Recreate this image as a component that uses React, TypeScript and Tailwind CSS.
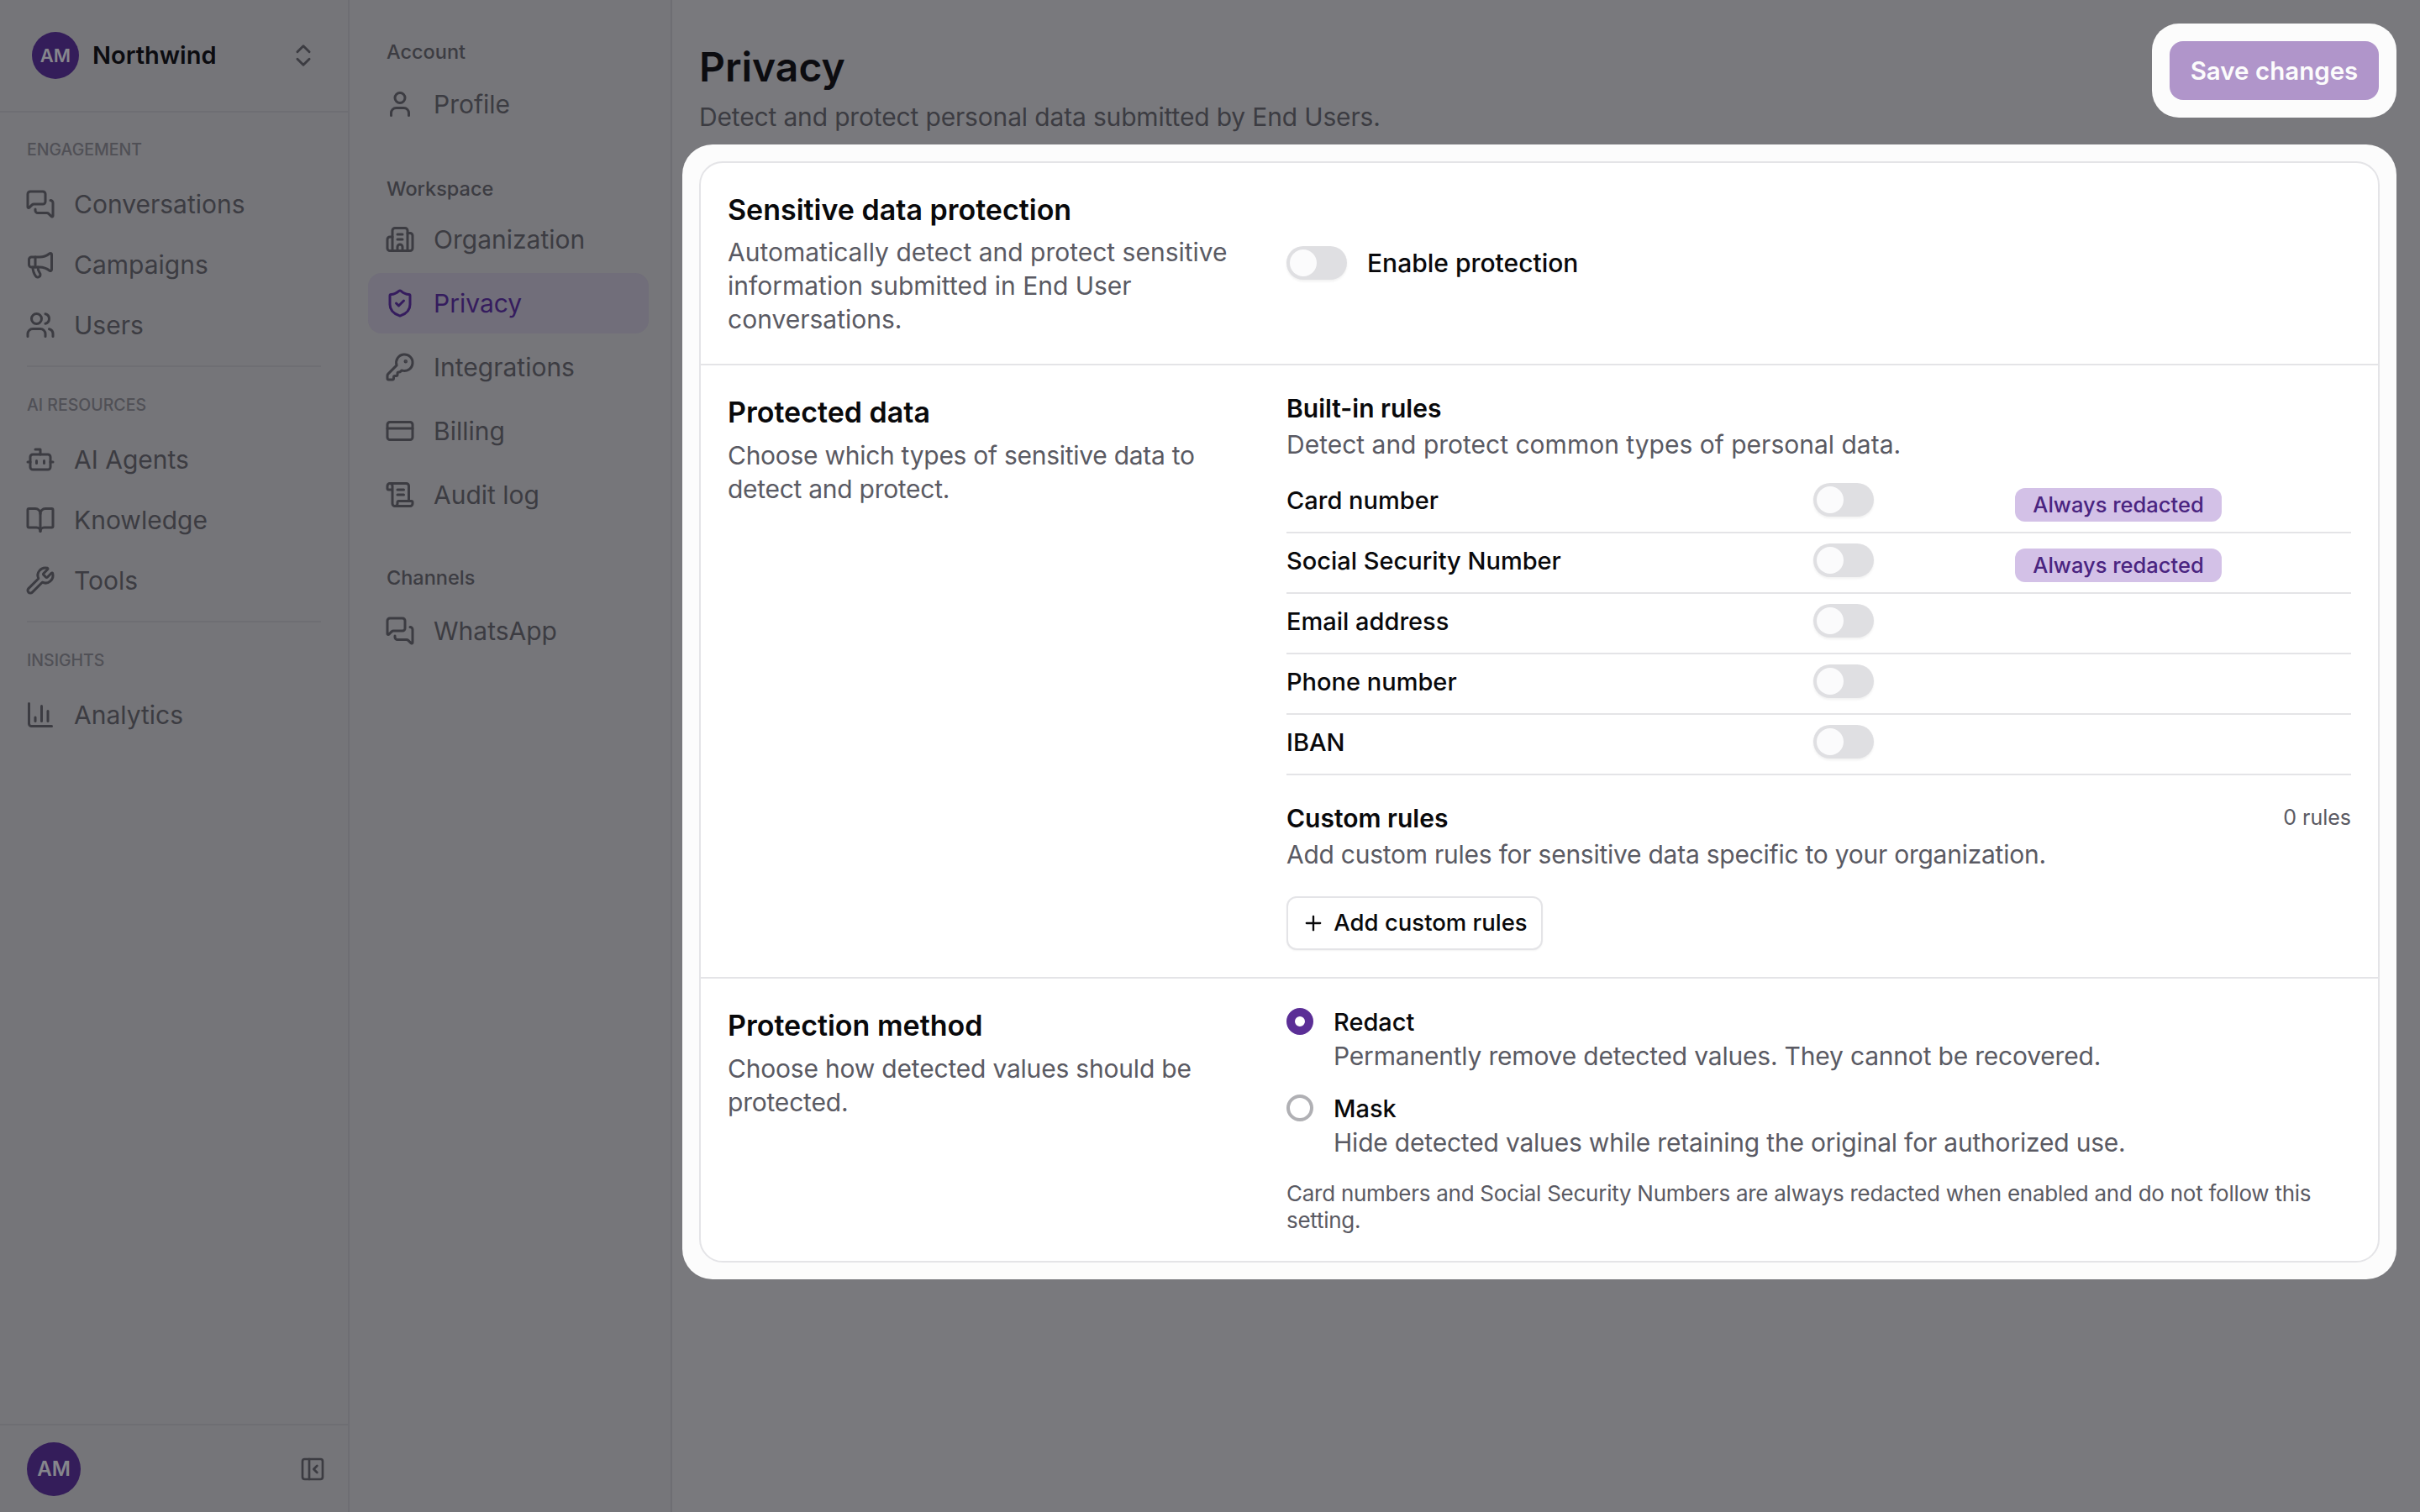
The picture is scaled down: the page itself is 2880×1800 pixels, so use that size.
import {
  BookOpen,
  Bot,
  Building2,
  ChartColumn,
  ChevronsUpDown,
  CreditCard,
  KeyRound,
  Megaphone,
  MessagesSquare,
  PanelLeftClose,
  Plus,
  ScrollText,
  ShieldCheck,
  User,
  Users,
  Wrench,
} from "lucide-react";
import type { LucideIcon } from "lucide-react";

const primaryNav: { label: string; items: { name: string; icon: LucideIcon }[] }[] = [
  {
    label: "ENGAGEMENT",
    items: [
      { name: "Conversations", icon: MessagesSquare },
      { name: "Campaigns", icon: Megaphone },
      { name: "Users", icon: Users },
    ],
  },
  {
    label: "AI RESOURCES",
    items: [
      { name: "AI Agents", icon: Bot },
      { name: "Knowledge", icon: BookOpen },
      { name: "Tools", icon: Wrench },
    ],
  },
  {
    label: "INSIGHTS",
    items: [{ name: "Analytics", icon: ChartColumn }],
  },
];

const rules = [
  { name: "Card number", redacted: true },
  { name: "Social Security Number", redacted: true },
  { name: "Email address", redacted: false },
  { name: "Phone number", redacted: false },
  { name: "IBAN", redacted: false },
];

function NavRow({ name, icon: Icon }: { name: string; icon: LucideIcon }) {
  return (
    <div className="flex h-[72px] items-center gap-[22px]">
      <Icon className="size-[36px] shrink-0 text-[#3c3c42]" />
      <span className="text-[30px] text-[#3c3c42]">{name}</span>
    </div>
  );
}

function PrimarySidebar() {
  return (
    <aside className="flex h-full w-[416px] shrink-0 flex-col border-r-2 border-[#6e6e73] bg-[#757579]">
      <div className="flex h-[134px] shrink-0 items-center gap-[16px] border-b-2 border-[#6e6e73] pl-[38px] pr-[36px]">
        <div className="flex size-[56px] items-center justify-center rounded-full bg-[#341d5a] text-[22px] font-semibold text-[#86868c]">
          AM
        </div>
        <span className="flex-1 text-[29px] font-semibold text-[#0c0c10]">Northwind</span>
        <ChevronsUpDown className="size-[34px] text-[#3c3c42]" />
      </div>
      <nav className="flex-1 px-[32px] pt-[31px]">
        {primaryNav.map((group, i) => (
          <div key={group.label} className={i > 0 ? "mt-[12px] border-t-2 border-[#6e6e73] pt-[32px]" : ""}>
            <div className="mb-[14px] flex h-[28px] items-center text-[19.5px] font-medium text-[#505056]">
              {group.label}
            </div>
            <div className="-ml-[2px]">
              {group.items.map((item) => (
                <NavRow key={item.name} name={item.name} icon={item.icon} />
              ))}
            </div>
          </div>
        ))}
      </nav>
      <div className="flex h-[105px] shrink-0 items-center justify-between border-t-2 border-[#6e6e73] pl-[32px] pr-[26px]">
        <div className="flex size-[64px] items-center justify-center rounded-full bg-[#341d5a] text-[24px] font-semibold text-[#86868c]">
          AM
        </div>
        <PanelLeftClose className="size-[32px] text-[#3c3c42]" />
      </div>
    </aside>
  );
}

function SubNavRow({ name, icon: Icon, active }: { name: string; icon: LucideIcon; active?: boolean }) {
  return (
    <div
      className={`flex h-[72px] items-center gap-[22px] rounded-[16px] pl-[20px] ${active ? "bg-[#716e7a] text-[#351c5e]" : "text-[#3c3c42]"}`}
    >
      <Icon className="size-[36px] shrink-0" />
      <span className="text-[30px]">{name}</span>
    </div>
  );
}

function SubNavLabel({ children, className }: { children: string; className: string }) {
  return (
    <div className={`flex h-[28px] items-center pl-[22px] text-[23.5px] font-medium text-[#3c3c42] ${className}`}>
      {children}
    </div>
  );
}

function SecondarySidebar() {
  return (
    <aside className="h-full w-[384px] shrink-0 border-r-2 border-[#6e6e73] bg-[#76767a] pl-[22px] pr-[26px] pt-[48px]">
      <SubNavLabel className="">Account</SubNavLabel>
      <div className="mt-[12px]">
        <SubNavRow name="Profile" icon={User} />
      </div>
      <SubNavLabel className="mt-[51px]">Workspace</SubNavLabel>
      <div className="mt-[10px] flex flex-col gap-[4px]">
        <SubNavRow name="Organization" icon={Building2} />
        <SubNavRow name="Privacy" icon={ShieldCheck} active />
        <SubNavRow name="Integrations" icon={KeyRound} />
        <SubNavRow name="Billing" icon={CreditCard} />
        <SubNavRow name="Audit log" icon={ScrollText} />
      </div>
      <SubNavLabel className="mt-[49px]">Channels</SubNavLabel>
      <div className="mt-[13px]">
        <SubNavRow name="WhatsApp" icon={MessagesSquare} />
      </div>
    </aside>
  );
}

function Toggle() {
  return (
    <div className="flex h-[40px] w-[72px] shrink-0 items-center rounded-full bg-[#dfdfe2] pl-[4px] shadow-[0_2px_3px_rgba(0,0,0,0.06)]">
      <div className="size-[32px] rounded-full bg-[#fbfbfc]" />
    </div>
  );
}

function RuleRow({ name, redacted }: { name: string; redacted: boolean }) {
  return (
    <div className="flex h-[72px] items-center border-b-2 border-[#e4e4e7]">
      <span className="w-[627px] -translate-y-[2px] text-[29px] font-medium text-[#09090b]">{name}</span>
      <div className="w-[240px] -translate-y-[3px]">
        <Toggle />
      </div>
      {redacted && (
        <span className="flex h-[40px] w-[246px] translate-y-[3px] items-center justify-center rounded-[12px] bg-[#d3c1e7] text-[25.5px] font-medium text-[#4a2480]">
          Always redacted
        </span>
      )}
    </div>
  );
}

function RadioOption({ label, desc, checked }: { label: string; desc: string; checked?: boolean }) {
  return (
    <div className="flex gap-[24px]">
      <div
        className={`mt-[1px] size-[32px] shrink-0 rounded-full bg-white ${checked ? "border-[10px] border-[#5b2e96]" : "border-[4px] border-[#b0b0b4]"}`}
      />
      <div>
        <div className="h-[36px] text-[29px] font-medium leading-[36px] text-[#09090b]">{label}</div>
        <div className="mt-[2px] text-[30px] leading-[40px] tracking-[-0.2px] text-[#5a5a63]">{desc}</div>
      </div>
    </div>
  );
}

function SectionIntro({ title, children, descClass }: { title: string; children: React.ReactNode; descClass: string }) {
  return (
    <div className="w-[601px] shrink-0">
      <h2 className="text-[34px] font-semibold leading-[40px] text-[#09090b]">{title}</h2>
      <p className={`text-[30px] leading-[40px] text-[#5a5a63] ${descClass}`}>{children}</p>
    </div>
  );
}

function PrivacyCard() {
  return (
    <div className="rounded-[36px] bg-[#fcfcfc] p-[20px]">
      <div className="rounded-[28px] border-2 border-[#e4e4e7] bg-white">
        {/* Sensitive data protection */}
        <section className="flex gap-[64px] border-b-2 border-[#e4e4e7] px-[32px] pb-[33px] pt-[36px]">
          <SectionIntro title="Sensitive data protection" descClass="mt-[10px]">
            Automatically detect and protect sensitive information submitted in End User conversations.
          </SectionIntro>
          <div className="flex items-center gap-[24px] pb-[4px]">
            <Toggle />
            <span className="text-[30px] font-medium text-[#09090b]">Enable protection</span>
          </div>
        </section>

        {/* Protected data */}
        <section className="flex gap-[64px] border-b-2 border-[#e4e4e7] px-[32px] pb-[32px] pt-[36px]">
          <SectionIntro title="Protected data" descClass="mt-[11px] tracking-[-0.28px]">
            Choose which types of sensitive data to detect and protect.
          </SectionIntro>
          <div className="-mt-[3px] flex-1">
            <h3 className="text-[30px] font-semibold leading-[36px] text-[#09090b]">Built-in rules</h3>
            <p className="mt-[5px] text-[30px] leading-[40px] text-[#5a5a63]">Detect and protect common types of personal data.</p>
            <div className="mt-[14px]">
              {rules.map((rule) => (
                <RuleRow key={rule.name} name={rule.name} redacted={rule.redacted} />
              ))}
            </div>
            <div className="mt-[32px] flex items-center justify-between">
              <h3 className="text-[30px] font-semibold leading-[36px] text-[#09090b]">Custom rules</h3>
              <span className="text-[25px] text-[#5a5a63]">0 rules</span>
            </div>
            <p className="mt-[4px] text-[30px] leading-[40px] tracking-[-0.25px] text-[#5a5a63]">
              Add custom rules for sensitive data specific to your organization.
            </p>
            <button className="mt-[30px] flex h-[64px] w-[305px] items-center justify-center gap-[10px] rounded-[12px] border-2 border-[#e4e4e7] bg-white text-[27.5px] font-medium text-[#09090b] shadow-[0_1px_2px_rgba(0,0,0,0.05)]">
              <Plus className="size-[28px]" />
              Add custom rules
            </button>
          </div>
        </section>

        {/* Protection method */}
        <section className="flex gap-[64px] px-[32px] pb-[32px] pt-[36px]">
          <SectionIntro title="Protection method" descClass="mt-[11px] tracking-[-0.2px]">
            Choose how detected values should be protected.
          </SectionIntro>
          <div className="-mt-[2px] flex-1">
            <RadioOption label="Redact" desc="Permanently remove detected values. They cannot be recovered." checked />
            <div className="mt-[25px]">
              <RadioOption label="Mask" desc="Hide detected values while retaining the original for authorized use." />
            </div>
            <p className="mt-[25px] text-[26px] leading-[32px] tracking-[-0.26px] text-[#5a5a63]">
              Card numbers and Social Security Numbers are always redacted when enabled and do not follow this setting.
            </p>
          </div>
        </section>
      </div>
    </div>
  );
}

export default function App() {
  return (
    <div className="flex h-screen w-full overflow-hidden bg-[#79797d] font-[Inter,sans-serif]">
      <PrimarySidebar />
      <SecondarySidebar />
      <main className="flex-1 pl-[12px] pr-[28px]">
        <header className="flex h-[172px] items-start justify-between">
          <div className="pl-[20px] pt-[52px]">
            <h1 className="text-[48px] font-semibold leading-[56px] text-[#0c0c10]">Privacy</h1>
            <p className="mt-[11px] text-[30px] leading-[40px] tracking-[-0.16px] text-[#3c3c42]">
              Detect and protect personal data submitted by End Users.
            </p>
          </div>
          <div className="mt-[28px] rounded-[32px] bg-[#fcfcfc] p-[21px]">
            <button className="flex h-[70px] w-[249px] items-center justify-center rounded-[16px] bg-[#b095ca] text-[29.5px] font-semibold text-[#fcfcfc]">
              Save changes
            </button>
          </div>
        </header>
        <PrivacyCard />
      </main>
    </div>
  );
}
